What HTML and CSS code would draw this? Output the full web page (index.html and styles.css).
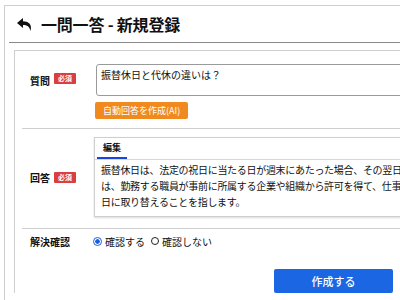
FILE: index.html
```html
<!DOCTYPE html>
<html lang="ja">
<head>
<meta charset="utf-8">
<link rel="stylesheet" href="styles.css">
</head>
<body>
<div class="panel">
  <div class="header">
    <svg class="back" width="16" height="13" viewBox="0 0 16 13"><path d="M6 0 L0 5 L6 10 L6 7 C10 7 12.5 8.5 13.5 13 C15.5 6 11 3.2 6 3.2 Z" fill="#111"/></svg>
    <h1 class="title">一問一答 - 新規登録</h1>
  </div>
  <div class="form">
    <div class="row row-q">
      <div class="label"><span>質問</span><span class="badge">必須</span></div>
      <div class="field">
        <div class="textarea">振替休日と代休の違いは？</div>
        <button class="ai-btn">自動回答を作成(AI)</button>
      </div>
    </div>
    <div class="row row-a">
      <div class="label"><span>回答</span><span class="badge">必須</span></div>
      <div class="field">
        <div class="editor">
          <div class="tabs"><span class="tab">編集</span></div>
          <div class="editor-body">
            <div class="line">振替休日は、法定の祝日に当たる日が週末にあたった場合、その翌日を休日とすることです。代休</div>
            <div class="line">は、勤務する職員が事前に所属する企業や組織から許可を得て、仕事をした日を別の</div>
            <div class="line">日に取り替えることを指します。</div>
          </div>
        </div>
      </div>
    </div>
    <div class="row row-r">
      <div class="label"><span>解決確認</span></div>
      <div class="field radios">
        <label class="radio"><span class="dot on"></span>確認する</label>
        <label class="radio"><span class="dot"></span>確認しない</label>
      </div>
    </div>
    <div class="actions">
      <button class="submit">作成する</button>
    </div>
  </div>
</div>
</body>
</html>
```
FILE: styles.css
```css
html, body {
  margin: 0;
  padding: 0;
  background: #fff;
  overflow: hidden;
}
body {
  font-family: "Noto Sans CJK JP", "Noto Sans", sans-serif;
  color: #111;
  width: 400px;
  height: 300px;
}
.panel {
  margin: 5px 0 0 4px;
  border-top: 1px solid #cfcfcf;
  border-left: 1px solid #cfcfcf;
  width: 396px;
  height: 295px;
  overflow: hidden;
}
.header {
  margin-left: 4px;
  height: 36px;
  border-bottom: 1px solid #8a8a8a;
  display: flex;
  align-items: center;
  padding-left: 8px;
  gap: 8px;
}
.back {
  display: block;
  margin-top: 1px;
}
.title {
  margin: 0;
  font-size: 16px;
  font-weight: 700;
  line-height: 20px;
  letter-spacing: -0.2px;
}
.form {
  margin: 7px 0 0 9px;
  border-top: 1px solid #cfcfcf;
  border-left: 1px solid #cfcfcf;
  padding-left: 7px;
  width: 500px;
}
.row {
  display: flex;
  border-bottom: 1px solid #cfcfcf;
}
.label {
  width: 65px;
  flex: none;
  padding-left: 8px;
  display: flex;
  align-items: center;
  gap: 4px;
  font-size: 10px;
  font-weight: 700;
}
.badge {
  background: #d93f3f;
  color: #fff;
  font-size: 7px;
  font-weight: 700;
  padding: 0 4px;
  height: 11px;
  line-height: 11px;
  border-radius: 1px;
}
.row-q {
  padding: 13px 0 9px;
}
.row-q .label {
  align-items: flex-start;
  padding-top: 9px;
}
.field {
  flex: 1;
  min-width: 0;
}
.textarea {
  height: 32px;
  box-sizing: border-box;
  border: 1px solid #9a9a9a;
  border-radius: 3px;
  font-size: 10px;
  line-height: 14px;
  padding: 3px 4px;
  margin-left: 1px;
}
.ai-btn {
  margin-top: 6px;
  background: #f08a1f;
  color: #fff;
  border: none;
  border-radius: 2px;
  font-family: inherit;
  font-size: 9px;
  height: 17px;
  padding: 0 8px;
  line-height: 17px;
  display: block;
}
.row-a {
  padding: 8px 0 11px;
}
.editor {
  margin-left: -1px;
  border: 1px solid #cfcfcf;
  box-shadow: 0 1px 2px rgba(0,0,0,0.15);
  height: 80px;
  box-sizing: border-box;
  overflow: hidden;
}
.tabs {
  height: 21px;
  border-bottom: 1px solid #d8d8d8;
  display: flex;
  padding-left: 2px;
}
.tab {
  width: 30px;
  padding-left: 6px;
  box-sizing: border-box;
  font-size: 9px;
  font-weight: 700;
  line-height: 20px;
  border-bottom: 2px solid #1a44e0;
  height: 21px;
}
.editor-body {
  font-size: 10px;
  line-height: 16px;
  padding: 2px 6px;
  letter-spacing: -0.3px;
}
.line {
  white-space: nowrap;
}
.row-r {
  height: 24px;
  border-bottom: none;
}
.radios {
  display: flex;
  align-items: center;
  gap: 6px;
  font-size: 10px;
  margin-left: -2px;
}
.radio {
  display: flex;
  align-items: center;
  gap: 3px;
}
.dot {
  width: 8px;
  height: 8px;
  border: 1px solid #222;
  border-radius: 50%;
  box-sizing: border-box;
  display: inline-block;
}
.dot.on {
  border: 1px solid #1a5fe0;
  background: radial-gradient(circle, #1a5fe0 0 2px, #fff 2.5px);
  width: 9px;
  height: 9px;
}
.actions {
  padding: 14px 0 0 252px;
}
.submit {
  width: 119px;
  height: 24px;
  background: #1a66e3;
  color: #fff;
  border: none;
  border-radius: 2px;
  font-family: inherit;
  font-size: 11px;
  font-weight: 500;
}
```
